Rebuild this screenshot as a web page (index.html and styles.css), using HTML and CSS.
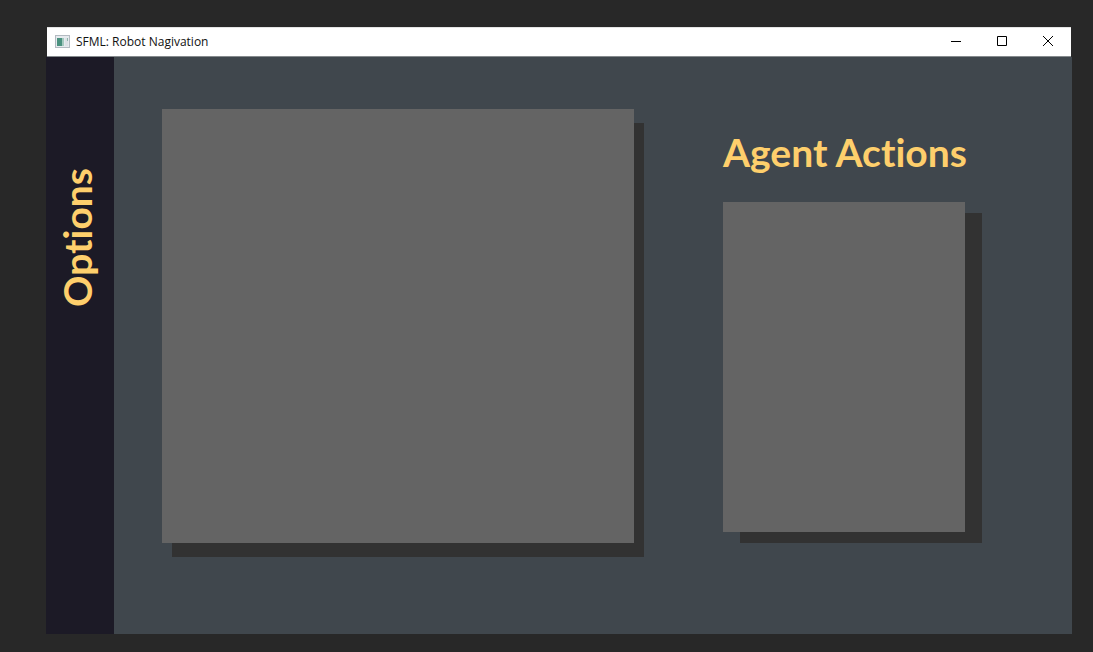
FILE: index.html
```html
<!DOCTYPE html>
<html lang="en">
<head>
<meta charset="utf-8">
<title>SFML: Robot Nagivation</title>
<link rel="stylesheet" href="styles.css">
</head>
<body>
<div class="window">
  <header class="titlebar">
    <svg class="app-icon" width="16" height="14" viewBox="0 0 16 14" aria-hidden="true">
      <rect x="0.5" y="0.5" width="14" height="12" fill="#e6eaee" stroke="#b3bac1"/>
      <rect x="2" y="3" width="5" height="8" fill="#4a917f"/>
      <rect x="7" y="3" width="2" height="8" fill="#a4c9bf"/>
      <rect x="10" y="3" width="3" height="8" fill="#dce1e6"/>
      <path d="M12.500 3v3" stroke="#8fb5ab"/>
    </svg>
    <span class="window-title">SFML: Robot Nagivation</span>
    <div class="controls">
      <button class="control" type="button" aria-label="Minimize">
        <svg width="12" height="12" viewBox="0 0 12 12"><path d="M1 5.500h10"/></svg>
      </button>
      <button class="control" type="button" aria-label="Maximize">
        <svg width="12" height="12" viewBox="0 0 12 12"><path d="M1.500 .500h9v9h-9z"/></svg>
      </button>
      <button class="control" type="button" aria-label="Close">
        <svg width="12" height="12" viewBox="0 0 12 12"><path d="M1 0l10 10M11 0L1 10"/></svg>
      </button>
    </div>
  </header>
  <div class="content">
    <aside class="sidebar"><h2 class="options">Options</h2></aside>
    <main class="stage">
      <section class="board" aria-label="Map"></section>
      <section class="actions">
        <h1 class="heading">Agent Actions</h1>
        <div class="panel"></div>
      </section>
    </main>
  </div>
</div>
</body>
</html>
```
FILE: styles.css
```css
* { box-sizing: border-box; }

body {
  margin: 0;
  background: #282828;
  font-family: Lato, sans-serif;
  font-variant-ligatures: none;
}

.window {
  display: flex;
  flex-direction: column;
  min-height: 100vh;
  padding: 27px 21px 18px 46px;
}

.titlebar {
  display: flex;
  align-items: center;
  height: 30px;
  margin: 0 1px;
  padding-left: 8px;
  background: #fff;
  border-top: 1px solid #e4e4e4;
  border-bottom: 1px solid #858a8d;
}

.window-title {
  margin-left: 5px;
  font: 12px/16px "Open Sans", sans-serif;
  color: #111;
}

.controls {
  display: flex;
  align-self: stretch;
  margin-left: auto;
}

.control {
  display: flex;
  align-items: center;
  justify-content: center;
  width: 46px;
  padding: 0;
  border: 0;
  background: none;
}

.control path {
  fill: none;
  stroke: #000;
}

.content {
  display: flex;
  flex: 1;
}

.sidebar {
  display: flex;
  justify-content: center;
  align-items: flex-start;
  width: 68px;
  padding: 111px 6px 0 0;
  background: #1c1a26;
}

.options {
  margin: 0;
  font-size: 39px;
  line-height: 60px;
  font-weight: 700;
  color: #fecf6c;
  writing-mode: vertical-rl;
  transform: rotate(180deg);
}

.stage {
  display: grid;
  grid-template-columns: minmax(0, 472fr) minmax(0, 242fr);
  column-gap: 89px;
  flex: 1;
  padding: 52px 107px 91px 48px;
  background: #40474d;
}

.board {
  background: #646464;
  box-shadow: 10px 14px #323232;
}

.actions {
  display: flex;
  flex-direction: column;
  padding: 19px 0 11px;
}

.heading {
  margin: 0 0 26px;
  font-size: 39px;
  line-height: 48px;
  font-weight: 700;
  color: #fecf6c;
  white-space: nowrap;
}

.panel {
  flex: 1;
  background: #646464;
  box-shadow: 17px 11px #323232;
}
```
